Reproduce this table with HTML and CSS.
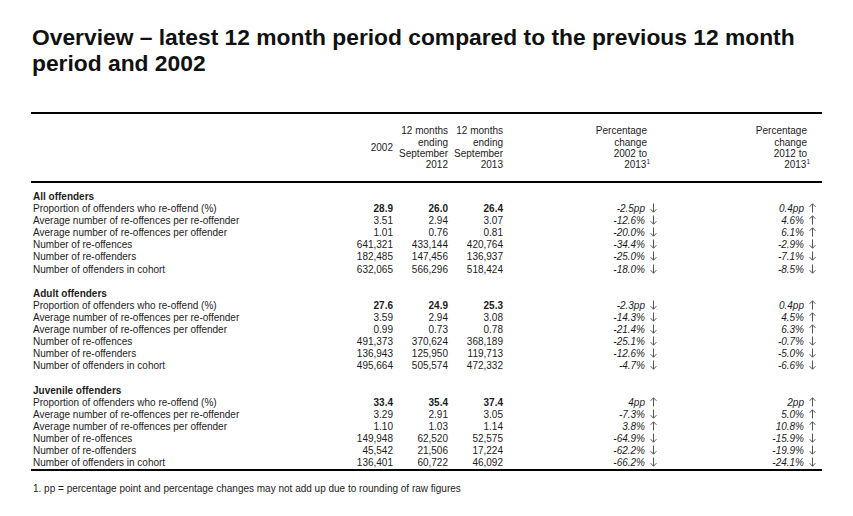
FILE: index.html
```html
<!DOCTYPE html>
<html lang="en">
<head>
<meta charset="utf-8">
<title>Overview</title>
<link rel="stylesheet" href="styles.css">
</head>
<body>
<svg class="defs" width="0" height="0" aria-hidden="true">
  <symbol id="dn" viewBox="0 0 7 10"><path d="M3.5 0.5V9.2M0.6 6.2L3.5 9.2L6.4 6.2" fill="none" stroke="#555" stroke-width="1"/></symbol>
  <symbol id="up" viewBox="0 0 7 10"><path d="M3.5 9.5V0.8M0.6 3.8L3.5 0.8L6.4 3.8" fill="none" stroke="#555" stroke-width="1"/></symbol>
</svg>
<main class="page">
  <h1 class="title">Overview – latest 12 month period compared to the previous 12 month period and 2002</h1>
  <table class="stats">
    <colgroup>
      <col class="w-label"><col class="w-a"><col class="w-b"><col class="w-b"><col class="w-c1"><col class="w-c2">
    </colgroup>
    <thead>
      <tr>
        <th class="lbl"></th>
        <th>2002</th>
        <th>12 months<br>ending<br>September<br>2012</th>
        <th>12 months<br>ending<br>September<br>2013</th>
        <th class="hc1">Percentage<br>change<br>2002 to<br>2013<sup>1</sup></th>
        <th class="hc2">Percentage<br>change<br>2012 to<br>2013<sup>1</sup></th>
      </tr>
    </thead>
    <tbody>
      <tr class="pad"><td colspan="6"></td></tr>
      <tr><td class="lbl sec" colspan="6">All offenders</td></tr>
      <tr class="b"><td class="lbl">Proportion of offenders who re-offend (%)</td><td>28.9</td><td>26.0</td><td>26.4</td><td class="c1"><i>-2.5pp</i><svg class="ar"><use href="#dn"/></svg></td><td class="c2"><i>0.4pp</i><svg class="ar"><use href="#up"/></svg></td></tr>
      <tr><td class="lbl">Average number of re-offences per re-offender</td><td>3.51</td><td>2.94</td><td>3.07</td><td class="c1"><i>-12.6%</i><svg class="ar"><use href="#dn"/></svg></td><td class="c2"><i>4.6%</i><svg class="ar"><use href="#up"/></svg></td></tr>
      <tr><td class="lbl">Average number of re-offences per offender</td><td>1.01</td><td>0.76</td><td>0.81</td><td class="c1"><i>-20.0%</i><svg class="ar"><use href="#dn"/></svg></td><td class="c2"><i>6.1%</i><svg class="ar"><use href="#up"/></svg></td></tr>
      <tr><td class="lbl">Number of re-offences</td><td>641,321</td><td>433,144</td><td>420,764</td><td class="c1"><i>-34.4%</i><svg class="ar"><use href="#dn"/></svg></td><td class="c2"><i>-2.9%</i><svg class="ar"><use href="#dn"/></svg></td></tr>
      <tr><td class="lbl">Number of re-offenders</td><td>182,485</td><td>147,456</td><td>136,937</td><td class="c1"><i>-25.0%</i><svg class="ar"><use href="#dn"/></svg></td><td class="c2"><i>-7.1%</i><svg class="ar"><use href="#dn"/></svg></td></tr>
      <tr><td class="lbl">Number of offenders in cohort</td><td>632,065</td><td>566,296</td><td>518,424</td><td class="c1"><i>-18.0%</i><svg class="ar"><use href="#dn"/></svg></td><td class="c2"><i>-8.5%</i><svg class="ar"><use href="#dn"/></svg></td></tr>
      <tr class="gap"><td colspan="6"></td></tr>
      <tr><td class="lbl sec" colspan="6">Adult offenders</td></tr>
      <tr class="b"><td class="lbl">Proportion of offenders who re-offend (%)</td><td>27.6</td><td>24.9</td><td>25.3</td><td class="c1"><i>-2.3pp</i><svg class="ar"><use href="#dn"/></svg></td><td class="c2"><i>0.4pp</i><svg class="ar"><use href="#up"/></svg></td></tr>
      <tr><td class="lbl">Average number of re-offences per re-offender</td><td>3.59</td><td>2.94</td><td>3.08</td><td class="c1"><i>-14.3%</i><svg class="ar"><use href="#dn"/></svg></td><td class="c2"><i>4.5%</i><svg class="ar"><use href="#up"/></svg></td></tr>
      <tr><td class="lbl">Average number of re-offences per offender</td><td>0.99</td><td>0.73</td><td>0.78</td><td class="c1"><i>-21.4%</i><svg class="ar"><use href="#dn"/></svg></td><td class="c2"><i>6.3%</i><svg class="ar"><use href="#up"/></svg></td></tr>
      <tr><td class="lbl">Number of re-offences</td><td>491,373</td><td>370,624</td><td>368,189</td><td class="c1"><i>-25.1%</i><svg class="ar"><use href="#dn"/></svg></td><td class="c2"><i>-0.7%</i><svg class="ar"><use href="#dn"/></svg></td></tr>
      <tr><td class="lbl">Number of re-offenders</td><td>136,943</td><td>125,950</td><td>119,713</td><td class="c1"><i>-12.6%</i><svg class="ar"><use href="#dn"/></svg></td><td class="c2"><i>-5.0%</i><svg class="ar"><use href="#dn"/></svg></td></tr>
      <tr><td class="lbl">Number of offenders in cohort</td><td>495,664</td><td>505,574</td><td>472,332</td><td class="c1"><i>-4.7%</i><svg class="ar"><use href="#dn"/></svg></td><td class="c2"><i>-6.6%</i><svg class="ar"><use href="#dn"/></svg></td></tr>
      <tr class="gap"><td colspan="6"></td></tr>
      <tr><td class="lbl sec" colspan="6">Juvenile offenders</td></tr>
      <tr class="b"><td class="lbl">Proportion of offenders who re-offend (%)</td><td>33.4</td><td>35.4</td><td>37.4</td><td class="c1"><i>4pp</i><svg class="ar"><use href="#up"/></svg></td><td class="c2"><i>2pp</i><svg class="ar"><use href="#up"/></svg></td></tr>
      <tr><td class="lbl">Average number of re-offences per re-offender</td><td>3.29</td><td>2.91</td><td>3.05</td><td class="c1"><i>-7.3%</i><svg class="ar"><use href="#dn"/></svg></td><td class="c2"><i>5.0%</i><svg class="ar"><use href="#up"/></svg></td></tr>
      <tr><td class="lbl">Average number of re-offences per offender</td><td>1.10</td><td>1.03</td><td>1.14</td><td class="c1"><i>3.8%</i><svg class="ar"><use href="#up"/></svg></td><td class="c2"><i>10.8%</i><svg class="ar"><use href="#up"/></svg></td></tr>
      <tr><td class="lbl">Number of re-offences</td><td>149,948</td><td>62,520</td><td>52,575</td><td class="c1"><i>-64.9%</i><svg class="ar"><use href="#dn"/></svg></td><td class="c2"><i>-15.9%</i><svg class="ar"><use href="#dn"/></svg></td></tr>
      <tr><td class="lbl">Number of re-offenders</td><td>45,542</td><td>21,506</td><td>17,224</td><td class="c1"><i>-62.2%</i><svg class="ar"><use href="#dn"/></svg></td><td class="c2"><i>-19.9%</i><svg class="ar"><use href="#dn"/></svg></td></tr>
      <tr class="last"><td class="lbl">Number of offenders in cohort</td><td>136,401</td><td>60,722</td><td>46,092</td><td class="c1"><i>-66.2%</i><svg class="ar"><use href="#dn"/></svg></td><td class="c2"><i>-24.1%</i><svg class="ar"><use href="#dn"/></svg></td></tr>
    </tbody>
  </table>
  <p class="note">1. pp = percentage point and percentage changes may not add up due to rounding of raw figures</p>
</main>
</body>
</html>
```

FILE: styles.css
```css
html, body {
  margin: 0;
  padding: 0;
  background: #ffffff;
}
body {
  font-family: "Liberation Sans", Arial, sans-serif;
  color: #1c1c1c;
}
.defs {
  position: absolute;
  width: 0;
  height: 0;
}
.page {
  padding: 0 0 0 31px;
}
.title {
  margin: 24px 0 0 1px;
  font-size: 22.8px;
  line-height: 26px;
  font-weight: bold;
  color: #111;
  width: 800px;
}
.stats {
  margin-top: 36px;
  width: 791px;
  border-collapse: collapse;
  table-layout: fixed;
  font-size: 10px;
}
.w-label { width: 309px; }
.w-a { width: 53px; }
.w-b { width: 55px; }
.w-c1 { width: 157px; }
.w-c2 { width: 162px; }
.stats thead th {
  border-top: 2px solid #000;
  border-bottom: 2px solid #000;
  height: 66px;
  padding: 1px 0 0;
  font-weight: normal;
  line-height: 11.4px;
  text-align: right;
  vertical-align: middle;
}
.stats thead th.hc1 { padding-right: 13px; }
.stats thead th.hc2 { padding-right: 15px; }
.stats sup {
  font-size: 6.5px;
  line-height: 0;
  vertical-align: 4px;
  margin-right: -3px;
}
.stats td {
  padding: 0;
  height: 12.1px;
  line-height: 12.1px;
  text-align: right;
  white-space: nowrap;
}
.stats td.lbl {
  text-align: left;
  padding-left: 2px;
}
.stats td.sec {
  font-weight: bold;
}
.stats tr.b td {
  font-weight: bold;
}
.stats tr.b td.lbl,
.stats tr.b td.c1,
.stats tr.b td.c2 {
  font-weight: normal;
}
.stats tr.pad td {
  height: 8px;
  line-height: 8px;
}
.stats tr.last td {
  border-bottom: 2px solid #000;
}
.stats td.c1 { padding-right: 2px; }
.stats td.c2 { padding-right: 5px; }
.stats td i {
  font-style: italic;
}
.ar {
  display: inline-block;
  width: 7px;
  height: 10px;
  margin-left: 5px;
  margin-right: 1px;
  vertical-align: -1px;
}
.note {
  margin: 12px 0 0 2px;
  font-size: 10px;
  line-height: 12px;
}
```
